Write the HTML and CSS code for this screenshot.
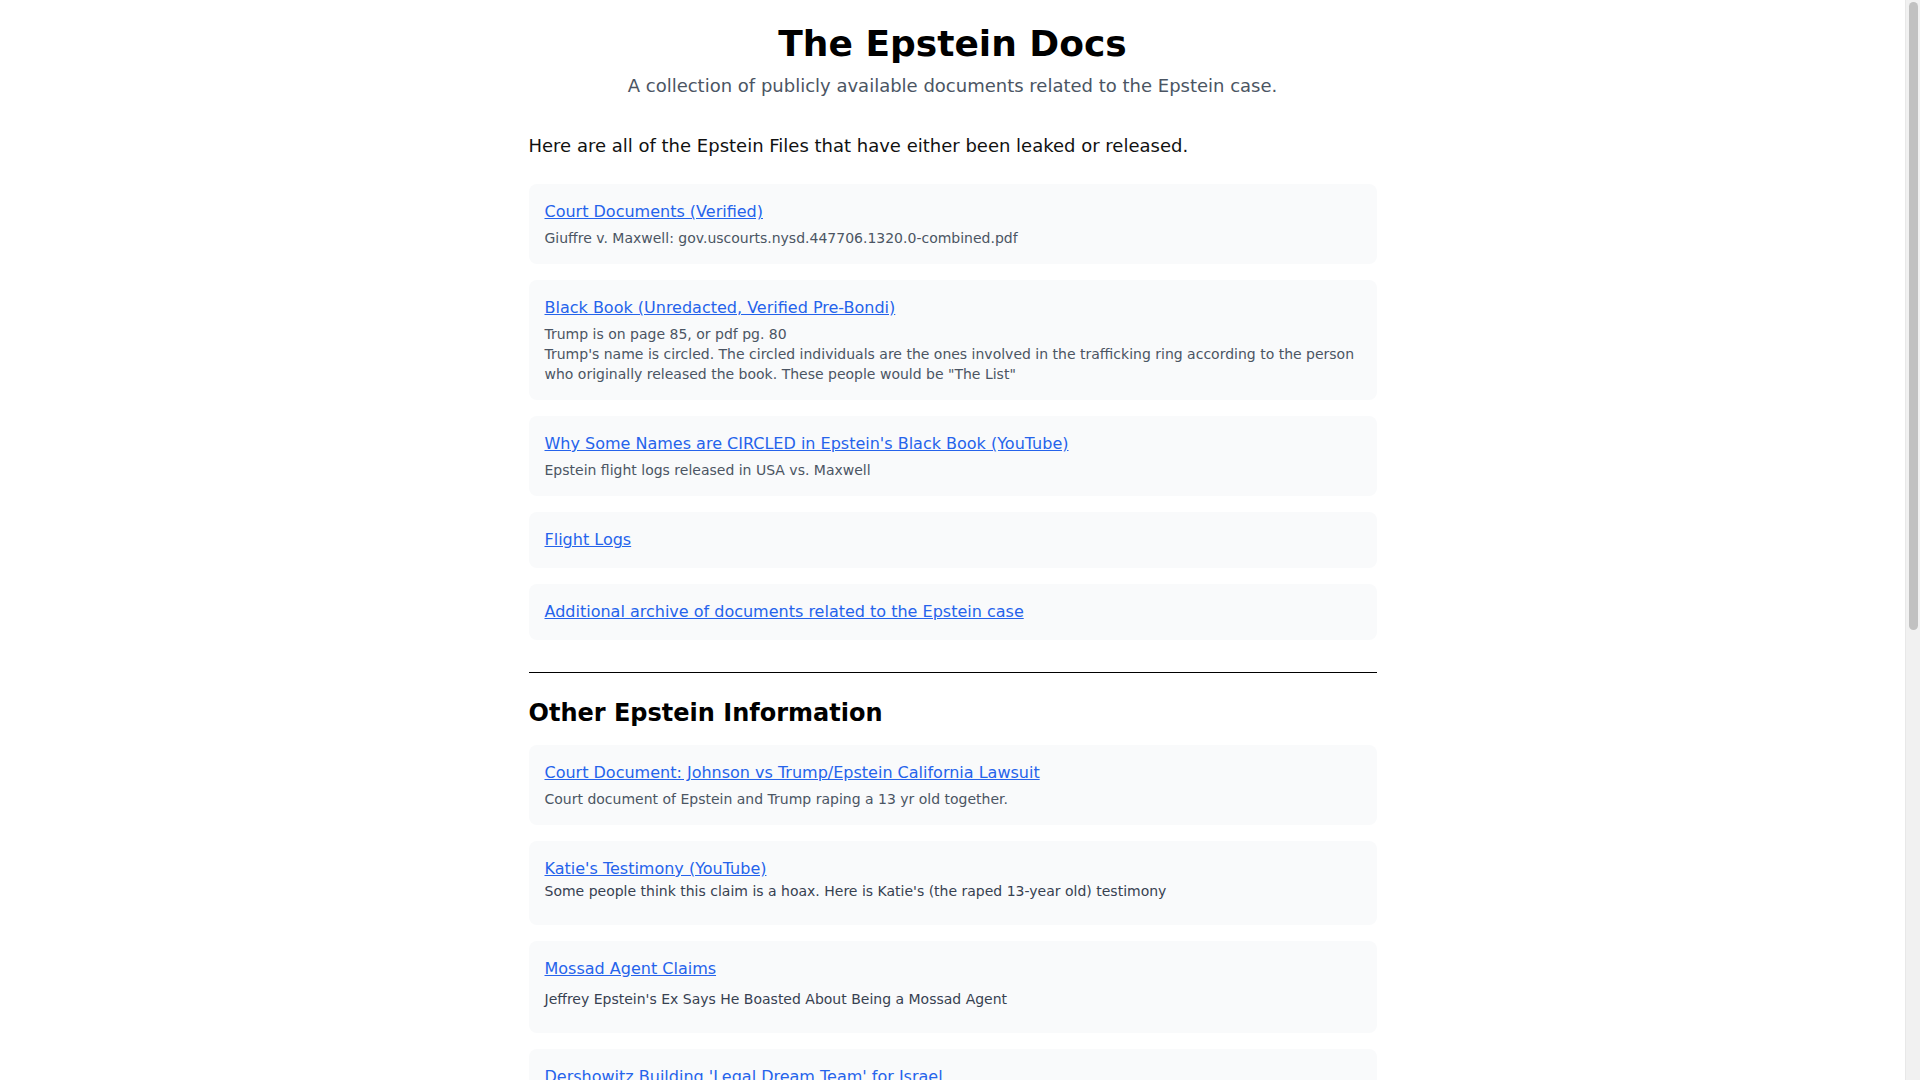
FILE: index.html
```html
<!DOCTYPE html>
<html lang="en">
<head>
<meta charset="utf-8">
<title>The Epstein Docs</title>
<link rel="stylesheet" href="styles.css">
</head>
<body>
<main class="page">
  <header class="header">
    <h1 class="title">The Epstein Docs</h1>
    <p class="subtitle">A collection of publicly available documents related to the Epstein case.</p>
  </header>

  <p class="intro">Here are all of the Epstein Files that have either been leaked or released.</p>

  <ul class="list">
    <li class="card">
      <a class="link" href="#">Court Documents (Verified)</a>
      <p class="desc">Giuffre v. Maxwell: gov.uscourts.nysd.447706.1320.0-combined.pdf</p>
    </li>
    <li class="card">
      <a class="link" href="#">Black Book (Unredacted, Verified Pre-Bondi)</a>
      <p class="desc">Trump is on page 85, or pdf pg. 80<br>Trump's name is circled. The circled individuals are the ones involved in the trafficking ring according to the person who originally released the book. These people would be "The List"</p>
    </li>
    <li class="card">
      <a class="link" href="#">Why Some Names are CIRCLED in Epstein's Black Book (YouTube)</a>
      <p class="desc">Epstein flight logs released in USA vs. Maxwell</p>
    </li>
    <li class="card">
      <a class="link" href="#">Flight Logs</a>
    </li>
    <li class="card">
      <a class="link" href="#">Additional archive of documents related to the Epstein case</a>
    </li>
  </ul>

  <hr class="divider">

  <h2 class="section-title">Other Epstein Information</h2>

  <ul class="list">
    <li class="card">
      <a class="link" href="#">Court Document: Johnson vs Trump/Epstein California Lawsuit</a>
      <p class="desc">Court document of Epstein and Trump raping a 13 yr old together.</p>
    </li>
    <li class="card">
      <a class="link" href="#">Katie's Testimony (YouTube)</a>
      <p class="desc desc-dark desc-tight">Some people think this claim is a hoax. Here is Katie's (the raped 13-year old) testimony</p>
    </li>
    <li class="card">
      <a class="link" href="#">Mossad Agent Claims</a>
      <p class="desc desc-dark desc-spaced">Jeffrey Epstein's Ex Says He Boasted About Being a Mossad Agent</p>
    </li>
    <li class="card">
      <a class="link" href="#">Dershowitz Building 'Legal Dream Team' for Israel</a>
      <p class="desc desc-dark desc-spaced">&nbsp;</p>
    </li>
  </ul>
</main>
<div class="scrollbar" aria-hidden="true"><div class="scrollbar-thumb"></div></div>
</body>
</html>
```

FILE: styles.css
```css
html, body {
  margin: 0;
  padding: 0;
  background: #ffffff;
}

body {
  font-family: "DejaVu Sans", "Noto Sans", sans-serif;
  color: #000000;
  font-size: 16px;
  line-height: 24px;
  padding-right: 15px;
}

.page {
  max-width: 896px;
  margin: 0 auto;
  padding: 24px 24px 800px;
  box-sizing: border-box;
}

.header {
  text-align: center;
  margin-bottom: 32px;
}

.title {
  margin: 0;
  font-size: 36px;
  line-height: 40px;
  font-weight: 700;
  color: #000000;
}

.subtitle {
  margin: 8px 0 0;
  font-size: 18px;
  line-height: 28px;
  color: #4b5563;
}

.intro {
  margin: 0 0 24px;
  font-size: 18px;
  line-height: 28px;
  color: #111111;
}

.list {
  list-style: none;
  margin: 0;
  padding: 0;
  display: flex;
  flex-direction: column;
  gap: 16px;
}

.card {
  background: #f9fafb;
  border-radius: 8px;
  padding: 16px;
}

.link {
  display: block;
  font-size: 16px;
  line-height: 24px;
  color: #2563eb;
  text-decoration: underline;
}

.desc {
  margin: 4px 0 0;
  font-size: 14px;
  line-height: 20px;
  color: #4b5563;
}

.desc-dark {
  color: #374151;
}

.desc-tight {
  margin: 0 0 8px;
}

.desc-spaced {
  margin: 8px 0;
}

.divider {
  margin: 32px 0 24px;
  border: 0;
  border-top: 1px solid #000000;
  height: 0;
}

.section-title {
  margin: 0 0 16px;
  font-size: 24px;
  line-height: 32px;
  font-weight: 700;
  color: #000000;
}

.scrollbar {
  position: fixed;
  top: 0;
  right: 0;
  width: 15px;
  height: 100vh;
  background: #f1f1f1;
  border-left: 1px solid #e8e8e8;
  box-sizing: border-box;
}

.scrollbar-thumb {
  margin: 2px 2px 0 3px;
  height: 628px;
  background: #c1c1c1;
  border-radius: 6px;
}
```
